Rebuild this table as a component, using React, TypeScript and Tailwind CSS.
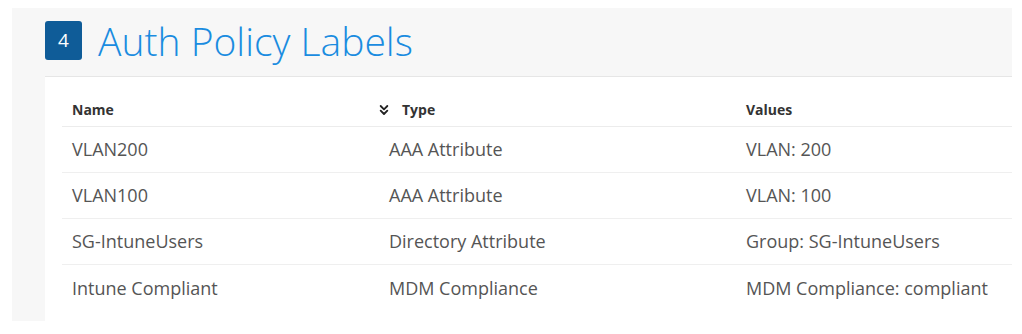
import { ChevronsDown } from "lucide-react";

const rows = [
  { name: "VLAN200", type: "AAA Attribute", values: "VLAN: 200" },
  { name: "VLAN100", type: "AAA Attribute", values: "VLAN: 100" },
  { name: "SG-IntuneUsers", type: "Directory Attribute", values: "Group: SG-IntuneUsers" },
  { name: "Intune Compliant", type: "MDM Compliance", values: "MDM Compliance: compliant" },
];

export default function App() {
  return (
    <div className="h-[334px] w-[1022px] bg-white pl-3 pt-2 pr-[10px] font-['Open_Sans',sans-serif]">
      <div className="flex h-[313px] flex-col overflow-hidden bg-[#f7f7f7]">
        <div className="flex items-center gap-4 pl-[33px] pt-[9px] pb-[12px]">
          <div className="flex h-[39px] w-[37px] items-center justify-center rounded-[3px] bg-[#0f5c98] text-[19px] text-white">
            4
          </div>
          <h1 className="text-[39px] font-light leading-[47px] text-[#1a8ce0]">
            Auth Policy Labels
          </h1>
        </div>

        <div className="ml-[33px] flex-1 border-t border-[#e6e6e6] bg-white pl-[17px] pt-[22px]">
          <div className="grid grid-cols-[317px_357px_1fr] border-b border-[#ececec] pb-[6px] text-[14px] font-bold text-[#333]">
            <div className="pl-[10px]">Name</div>
            <div className="flex items-center gap-[10px]">
              <ChevronsDown className="-ml-[3px] size-[16px] text-[#222]" strokeWidth={2.75} />
              <span>Type</span>
            </div>
            <div className="pl-[10px]">Values</div>
          </div>
          {rows.map((r) => (
            <div
              key={r.name}
              className="grid h-[46px] grid-cols-[317px_357px_1fr] items-center border-b border-[#efefef] text-[18px] text-[#555] last:border-b-0"
            >
              <div className="pl-[10px]">{r.name}</div>
              <div className="pl-[10px]">{r.type}</div>
              <div className="pl-[10px]">{r.values}</div>
            </div>
          ))}
        </div>
      </div>
    </div>
  );
}
